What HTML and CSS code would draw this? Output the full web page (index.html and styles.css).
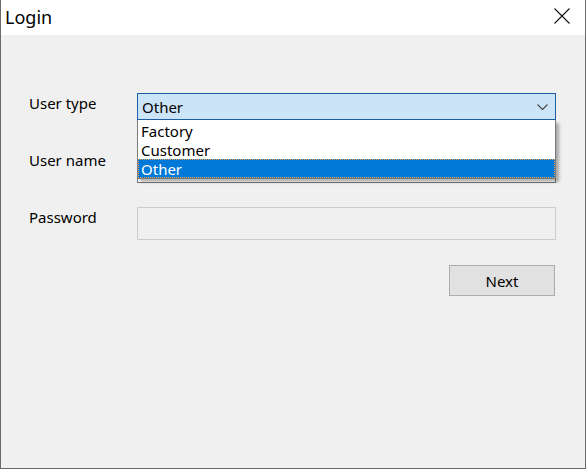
FILE: index.html
```html
<!DOCTYPE html>
<html lang="en">

<head>
    <meta charset="UTF-8">
    <title>Login</title>
    <link rel="stylesheet" href="styles.css">
</head>

<body>
    <div class="window">
        <div class="title-bar">
            <span class="title">Login</span>
            <button class="close-btn" aria-label="Close">
                <svg width="16" height="16" viewBox="0 0 16 16">
                    <path d="M0.5 0.5 L15.5 15.5 M15.5 0.5 L0.5 15.5" stroke="#111" stroke-width="1.1" fill="none" />
                </svg>
            </button>
        </div>
        <div class="content">
            <div class="form">
                <div class="row">
                    <label class="label">User type</label>
                    <div class="combo-wrap">
                        <div class="combo">
                            <span class="combo-value">Other</span>
                            <svg class="chevron" width="11" height="6" viewBox="0 0 11 6">
                                <path d="M0.5 0.5 L5.5 5.5 L10.5 0.5" stroke="#444" stroke-width="1.1" fill="none" />
                            </svg>
                        </div>
                        <ul class="combo-list">
                            <li class="combo-item">Factory</li>
                            <li class="combo-item">Customer</li>
                            <li class="combo-item selected">Other</li>
                        </ul>
                    </div>
                </div>
                <div class="row">
                    <label class="label">User name</label>
                    <div class="textbox"></div>
                </div>
                <div class="row">
                    <label class="label">Password</label>
                    <div class="textbox disabled"></div>
                </div>
                <div class="actions">
                    <button class="btn">Next</button>
                </div>
            </div>
        </div>
    </div>
</body>

</html>
```

FILE: styles.css
```css
* {
    box-sizing: border-box;
}

body {
    margin: 0;
    font-family: "Noto Sans", "Open Sans", sans-serif;
    color: #000;
}

.window {
    width: 586px;
    height: 469px;
    display: flex;
    flex-direction: column;
    border: 1px solid #6b6b6b;
    border-top: none;
    background-color: #f0f0f0;
}

.title-bar {
    height: 35px;
    flex-shrink: 0;
    display: flex;
    align-items: center;
    justify-content: space-between;
    padding: 0 15px 0 4px;
    background-color: #fff;
}

.title {
    font-size: 18px;
    padding-bottom: 2px;
}

.close-btn {
    border: none;
    background: none;
    padding: 0;
    width: 16px;
    height: 16px;
    margin-bottom: 3px;
}

.close-btn svg {
    display: block;
}

.content {
    flex: 1;
    padding: 58px 0 0 28px;
}

.row {
    display: flex;
    align-items: flex-start;
    height: 57px;
}

.label {
    width: 108px;
    font-size: 15px;
    line-height: 20px;
}

.combo-wrap {
    position: relative;
    width: 419px;
}

.combo {
    height: 27px;
    display: flex;
    align-items: center;
    justify-content: space-between;
    padding: 0 7px 0 4px;
    border: 1px solid #1c5da4;
    background-color: #cce4f7;
    font-size: 15px;
}

.combo-value {
    padding-top: 1px;
}

.chevron {
    display: block;
    margin-top: 1px;
}

.combo-list {
    position: absolute;
    top: 27px;
    left: 0;
    width: 419px;
    margin: 0;
    padding: 1px 0 0;
    list-style: none;
    background-color: #fff;
    border: 1px solid #7a7a7a;
    border-top: none;
    box-shadow: 3px 3px 3px rgba(0, 0, 0, 0.3);
    z-index: 2;
}

.combo-item {
    height: 19px;
    line-height: 18px;
    padding-left: 2px;
    font-size: 15px;
    border: 1px solid transparent;
}

.combo-item.selected {
    background-color: #0078d7;
    color: #fff;
    border: 1px dotted #f7a04d;
}

.textbox {
    width: 419px;
    height: 33px;
    background-color: #fff;
    border: 1px solid #7a7a7a;
}

.textbox.disabled {
    background-color: #f0f0f0;
    border-color: #cccccc;
}

.actions {
    width: 526px;
    display: flex;
    justify-content: flex-end;
    padding-top: 1px;
}

.btn {
    width: 106px;
    height: 31px;
    font-family: inherit;
    font-size: 15px;
    background-color: #e1e1e1;
    border: 1px solid #adadad;
    color: #000;
    padding: 0;
}
```
